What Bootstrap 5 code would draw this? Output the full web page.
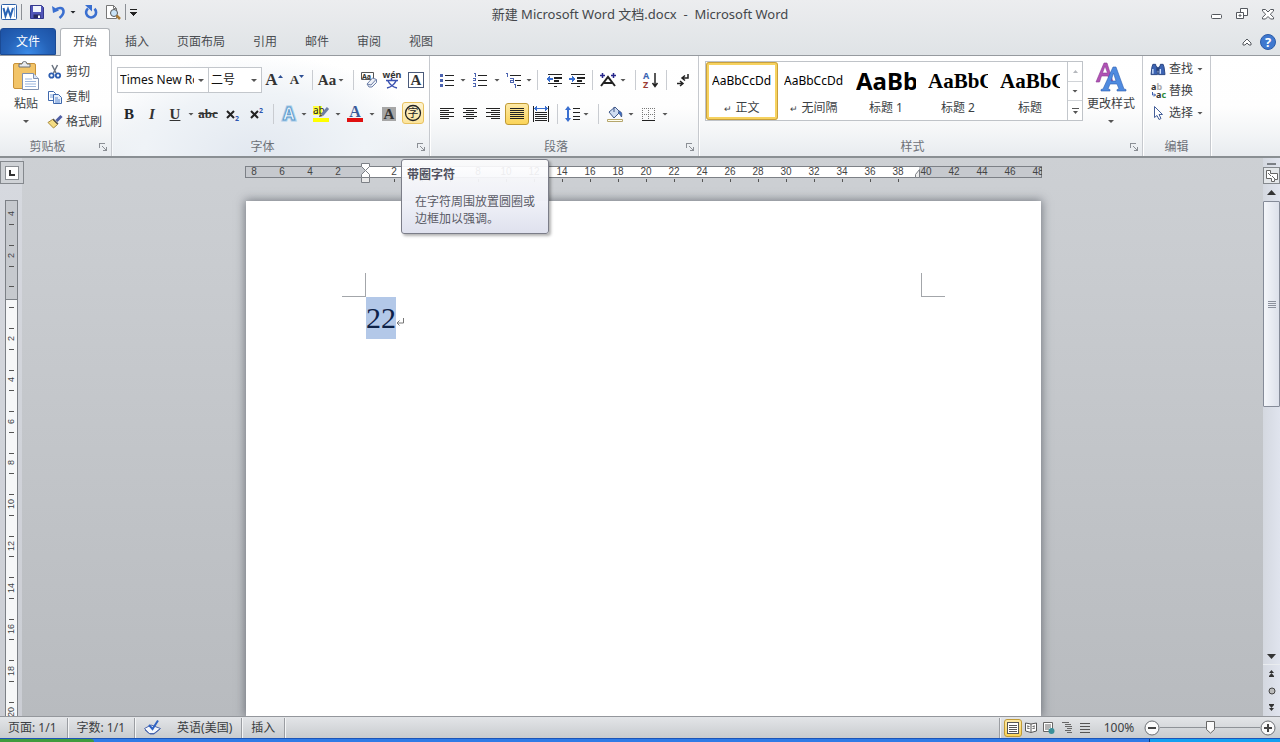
<!DOCTYPE html>
<html lang="zh-CN">
<head>
<meta charset="utf-8">
<meta name="viewport" content="width=device-width, initial-scale=1">
<title>新建 Microsoft Word 文档.docx - Microsoft Word</title>
<link href="https://cdn.jsdelivr.net/npm/bootstrap@5.3.0/dist/css/bootstrap.min.css" rel="stylesheet">
<style>
body{height:100vh;overflow:hidden;font-family:"Noto Sans","Noto Sans CJK SC",sans-serif;font-size:12px;line-height:16px;color:#3c3f44;background:#c4c6ca}
button{font:inherit;color:inherit;border:0;background:none;padding:0;display:inline-flex;align-items:center;justify-content:center;flex:none}
svg{display:block;flex:none;overflow:visible}
.crisp{shape-rendering:crispEdges}
.tri{display:block;flex:none;width:6px;height:3px;background:#555;clip-path:polygon(0 0,100% 0,50% 100%)}
.shell-top{background:linear-gradient(#ecedef,#dfe3e6)}
.titlebar{height:28px;padding:0 6px 4px 1px}
.doc-title{font-size:13px;color:#44474b;margin-top:3px}
.vsep{width:1px;height:16px;background:#8b8f95;flex:none}
.tabs{height:28px;border-bottom:1px solid #969a9f}
.tabs a{display:block;color:#4a4d52;text-decoration:none;padding:0 14px;height:28px;line-height:28px}
.tabs a.file-tab{background:radial-gradient(ellipse at 50% 100%,#3b8be8 0,#2563b9 55%,#1c51a4 100%);color:#fff;width:56px;border:1px solid #1b4a94;border-radius:3px 3px 0 0;height:27px;line-height:26px;margin-right:4px}
.tabs a.on{background:#fff;border:1px solid #b0b4b9;border-bottom:0;border-radius:3px 3px 0 0;padding:0 12px;margin-right:1px;line-height:26px}
.ribbon{height:102px;background:linear-gradient(#fff 0,#fefefe 50%,#f2f4f6 80%,#e8ebef 100%);border-bottom:2px solid #8a8f93;z-index:5}
.grp{display:flex;flex-direction:column;flex:none;border-right:1px solid #c6c9ce;box-shadow:1px 0 #fff}
.g-clip{width:112px}.g-font{width:318px;padding-left:5px;background:radial-gradient(ellipse at 45% 100%,#e2e8f0,#eff3f7 45%,transparent 72%)}
.g-para{width:269px;padding-left:5px}.g-style{width:444px}.g-edit{width:68px}
.g-rows{padding-top:7px}
.line{display:flex;align-items:center;height:34px}
.grp footer{display:flex;align-items:center;height:18px;margin-top:auto;color:#6d7178;text-align:center}
.grp footer span{flex:1}
.g-font footer,.g-para footer{margin-left:-5px}
.launch{width:16px;height:16px}
.clip-row{height:24px}
.b20{width:20px;height:22px}.b22{width:22px;height:22px}.b24{width:24px;height:22px}.b26{width:26px;height:22px}.dd{width:8px;height:22px}
.gap-bar{width:9px;height:20px;flex:none;background:linear-gradient(#c9ccd1,#c9ccd1) center/1px 100% no-repeat}
.hot{background:linear-gradient(#fde9a6,#fbd458);border:1px solid #c09a35;border-radius:3px}
.hot.soft{background:linear-gradient(#fdf3d2,#fce49a);border-color:#e8c15f}
.combo{appearance:none;border:1px solid #c3c7cc;border-radius:0;height:26px;color:#111;padding:0 14px 0 2px;background:#fff url("data:image/svg+xml,%3Csvg xmlns='http://www.w3.org/2000/svg' width='6' height='3'%3E%3Cpath d='M0 0h6L3 3z' fill='%23555'/%3E%3C/svg%3E") no-repeat right 4px center;font-size:12px;flex:none}
.c-name{width:92px}.c-size{width:54px;margin-left:-1px}
.ser{font-family:"Liberation Serif","Noto Sans CJK SC",serif;font-weight:700;color:#333}
.f13{font-size:13px}.f15{font-size:15px}.f17{font-size:17px}
.tip{left:-1px;top:57px;width:148px;height:75px;border:1px solid #7b7d88;border-radius:3px;background:linear-gradient(rgba(255,255,255,.9),rgba(240,241,248,.97) 55%,#dfe1ee);box-shadow:2px 2px 3px rgba(0,0,0,.3);color:#5a5b66;text-align:left;padding:6px 5px;z-index:20;line-height:17px}
.tip b{display:block;color:#505260;margin-bottom:10px}
.tip p{margin:0 0 0 8px}
.gallery{border:1px solid #bfc3c8;height:60px;margin:5px 0 0 6px;background:#fff;width:378px}
.tile{width:72px;flex-direction:column;justify-content:flex-start;height:58px;border:3px solid transparent;padding-top:1px}
.tile small{font-size:9px}
.tile.on{border-color:#f6d25f;outline:1px solid #c9a03c;outline-offset:-1px;border-radius:3px}
.pv{display:flex;align-items:center;width:60px;height:30px;overflow:hidden;white-space:nowrap;color:#000;line-height:30px}
.pv.h1x{font-weight:700;font-size:24px}
.pv.h2x{font-family:"Liberation Serif",serif;font-weight:700;font-size:21px;color:#000}
.g-scroll{width:15px;border-left:1px solid #c3c7cc}
.g-scroll button{flex:1;width:100%;border-bottom:1px solid #d0d3d7}
.edit-list{padding:2px 0 0 8px}
.work{background:linear-gradient(#cdd0d4,#b8bbbf);min-height:0}
.lcol{width:24px;flex:none}
.lcol-in{width:22px;background:rgba(226,229,238,.45)}
.corner{width:24px;height:23px;margin-top:3px;border:1px solid #85898e;background:#cfd2d6}
.corner span{display:flex;width:14px;height:14px;border:1px solid #8a8e93;background:#fff;align-items:center;justify-content:center}
.vruler{width:13px;margin:16px 0 0 5px;border:1px solid #7c8086;border-bottom:0;background:linear-gradient(#c6c9ce 98px,#7c8086 98px,#7c8086 99px,#f6f7f8 99px);overflow:hidden;min-height:0}
.vruler ol{height:540px;margin:-8px 0 0;font:9px/11px "Liberation Sans Narrow","Liberation Sans",sans-serif}
.vruler li{flex:1;width:11px;display:flex;align-items:center;justify-content:center;position:relative}
.vruler li span{writing-mode:vertical-rl;transform:rotate(180deg)}
.vruler li::before,.vruler li::after{content:"";position:absolute;left:3px;width:5px;height:1px;background:#555;top:25%}
.vruler li::after{top:75%}
.vruler li:first-child::before{display:none}
.hruler{width:797px;height:24px;margin:4px auto 0;overflow:hidden}
.hruler ol{height:12px;margin:4px 0 0;border:1px solid #7c8086;background:linear-gradient(90deg,#c6c9ce 120px,#fff 120px,#fff 673px,#c6c9ce 673px);font:10px/10px "Liberation Sans",sans-serif;color:#444;padding-left:0}
.hruler li{width:28px;flex:none;text-align:center;position:relative}
.hruler li:first-child{margin-left:-6px}
.hruler li.t::after{content:"";position:absolute;left:14px;top:12px;width:1px;height:3px;background:#555}
.mk{top:1px;left:116px}.mk2{top:4px;left:670px}
.hband{height:43px;flex:none}
.page{width:795px;margin:0 auto;background:#fff;padding:72px 96px 0;box-shadow:0 0 9px 1px rgba(50,55,65,.55)}
.cm{width:24px;height:24px;border-bottom:1px solid #a3a6aa}
.cm.l{border-right:1px solid #a3a6aa}.cm.r{border-left:1px solid #a3a6aa}
.body-line{padding-left:24px;font:30px/42px "Liberation Serif",serif;color:#0e2248}
.body-line mark{background:#b3c8e8;color:inherit;padding:0}
.scroll{width:17px;flex:none;background:linear-gradient(90deg,#d4d8e0,#e0e4ee);padding-top:3px}
.scroll button{width:100%}
.split{height:6px}.rtog{height:17px;border:1px solid #85898e;background:#e4e7ea}
.up{height:17px}.thumb{height:206px;border:1px solid #858b98;border-radius:1px;background:linear-gradient(90deg,#f4f6fa,#dce0ea)}
.nv{height:17px}
.status{height:22px;background:linear-gradient(#e3e5e8,#c9cccf);border-top:1px solid #94979c;color:#3b3e42}
.status .cell{height:20px;border-right:1px solid #9a9da2;box-shadow:1px 0 #f4f5f6;padding:0 9px;display:flex;align-items:center}
.status .cell:first-child{padding:0 10px 0 8px}
.status .v{width:18px;height:18px}
.pct{width:34px}
.zoomr{appearance:none;width:100px;height:16px;margin:0;background:linear-gradient(#8e9297,#8e9297) center/100% 1px no-repeat}
.zoomr::-webkit-slider-thumb{appearance:none;width:9px;height:13px;background:url("data:image/svg+xml,%3Csvg xmlns='http://www.w3.org/2000/svg' width='9' height='13'%3E%3Cpath d='M.5.5h8v8l-4 3.6-4-3.6z' fill='%23fafafa' stroke='%23666'/%3E%3C/svg%3E")}
.strip{height:4px;background:#2f7be6;border-top:1px solid #1c55b8}
.strip .s1{width:94px;background:#3f9b3d;border-radius:0 4px 0 0}.strip .s2{width:131px;background:#14a0f0;border-left:1px solid #0b3a80}
</style>
</head>
<body class="d-flex flex-column">
<header class="shell-top flex-shrink-0">
  <div class="titlebar d-flex align-items-center position-relative">
    <svg width="16" height="16" viewBox="0 0 16 16"><rect x=".5" y=".5" width="15" height="15" rx="1" fill="#fff" stroke="#2c5fa8"/><path d="M13.500 3v10" stroke="#8fb0dd"/><path d="M2.500 4l2 8L7 5l2.500 7L12 4" fill="none" stroke="#2a64b5" stroke-width="2"/></svg>
    <span class="vsep mx-1"></span>
    <button class="ms-1" aria-label="保存"><svg width="14" height="14" viewBox="0 0 14 14"><path d="M.5.5h11l2 2v11H.5z" fill="#5156b8" stroke="#34388c"/><path d="M3 1h8v6H3z" fill="#f2f5fb"/><path d="M3.500 9.500h7V13h-7z" fill="#27295f"/><path d="M8 10.500h2V13H8z" fill="#fff"/></svg></button>
    <button class="ms-2" aria-label="撤销"><svg width="14" height="14" viewBox="0 0 14 14"><path d="M3 5.500C6 2 11 2 11.500 6c.3 3-1.500 5-4 7" fill="none" stroke="#3a6fd0" stroke-width="2.600"/><path d="M0 1l1 7 6-2.500z" fill="#3a6fd0"/></svg></button>
    <button class="ms-1" aria-label="撤销列表"><i class="tri bg-dark"></i></button>
    <button class="ms-2" aria-label="重复"><svg width="14" height="14" viewBox="0 0 14 14"><path d="M10.500 3.800A5 5 0 1 1 4 3.500" fill="none" stroke="#3a6fd0" stroke-width="2.600"/><path d="M1 0h7v6.500z" fill="#3a6fd0"/></svg></button>
    <button class="ms-2" aria-label="打印预览"><svg width="15" height="15" viewBox="0 0 15 15"><path d="M.5.500h7l3 3v10H.500z" fill="#fff" stroke="#777"/><path d="M7.500.5v3h3" fill="none" stroke="#777"/><circle cx="8" cy="8" r="3.500" fill="#c9e3f6" stroke="#555"/><path d="M10.500 10.500l3.500 3.500" stroke="#a97b35" stroke-width="2.500"/></svg></button>
    <span class="vsep me-1 ms-1"></span>
    <button aria-label="自定义快速访问工具栏"><svg class="crisp" width="7" height="7"><path d="M0 0h7v1H0z" fill="#222"/><path d="M0 3h7L3.500 7z" fill="#222"/></svg></button>
    <div class="doc-title position-absolute start-0 end-0 text-center pe-none">新建 Microsoft Word 文档.docx&nbsp; -&nbsp; Microsoft Word</div>
    <div class="ms-auto d-flex align-items-center pt-1" style="gap:14px">
      <button aria-label="最小化"><svg width="11" height="12"><rect x=".5" y="6.500" width="10" height="4" rx="1" fill="#fff" stroke="#54585e"/></svg></button>
      <button aria-label="向下还原"><svg width="12" height="12"><path d="M4.500.500h7v7h-7z" fill="#fff" stroke="#54585e"/><path d="M.5 4.500h7v6h-7z" fill="#fff" stroke="#54585e"/><path d="M3 7h2v1H3z" stroke="#54585e" fill="none"/></svg></button>
      <button aria-label="关闭"><svg width="12" height="11"><path d="M.5.5h3L6 3 8.500.5h3v1.600L8.300 5.200l3.200 3.200V10h-3L6 7.500 3.500 10h-3V8.400l3.200-3.200L.5 2.100z" fill="#fff" stroke="#54585e"/></svg></button>
    </div>
  </div>
  <nav class="tabs d-flex">
    <a class="file-tab text-center px-0" href="#">文件</a><a class="on" href="#">开始</a><a href="#">插入</a><a href="#">页面布局</a><a href="#">引用</a><a href="#">邮件</a><a href="#">审阅</a><a href="#">视图</a>
    <div class="ms-auto d-flex align-items-center gap-2 pe-1">
      <button aria-label="功能区最小化"><svg width="10" height="8"><path d="M1 5l4-4 4 4v2H7L5 5 3 7H1z" fill="#fff" stroke="#54585e"/></svg></button>
      <button aria-label="帮助"><svg width="16" height="16"><circle cx="8" cy="8" r="7.500" fill="#3f78cf" stroke="#2c5ca8"/><text x="8" y="13" font-size="13" font-weight="700" fill="#fff" text-anchor="middle">?</text></svg></button>
    </div>
  </nav>
</header>

<section class="ribbon d-flex flex-shrink-0 position-relative">
  <div class="grp g-clip">
    <div class="d-flex align-items-start">
      <button class="flex-column ms-2 mt-1 px-1">
        <svg width="28" height="32" viewBox="0 0 28 32"><rect x="1.500" y="3.500" width="22" height="25" rx="1.500" fill="#f2c468" stroke="#c8923a"/><path d="M7 7V4h3a2.500 2.500 0 0 1 5 0h3v3z" fill="#e9ebee" stroke="#6c7076"/><path d="M10.500 13.500h11l5 5v11h-16z" fill="#fff" stroke="#7f91b0"/><path d="M21.500 13.500v5h5" fill="#dbe6f6" stroke="#7f91b0"/><path d="M13 19h7M13 21.500h11M13 24h11M13 26.500h11" stroke="#9db7dd"/></svg>
        <span class="mt-1">粘贴</span><i class="tri mt-2"></i>
      </button>
      <div class="d-flex flex-column ms-1 mt-1" style="gap:1px">
        <button class="clip-row justify-content-start gap-1"><svg width="14" height="14" viewBox="0 0 14 14"><path d="M4 0l4 8M9.500 0L5.500 8" stroke="#6b7480" stroke-width="1.500"/><circle cx="3.500" cy="10.500" r="2.200" fill="none" stroke="#2c5db0" stroke-width="1.800"/><circle cx="10" cy="10.500" r="2.200" fill="none" stroke="#2c5db0" stroke-width="1.800"/></svg>剪切</button>
        <button class="clip-row justify-content-start gap-1"><svg width="14" height="13" viewBox="0 0 14 13"><path d="M.5.500h5l2 2v7h-7z" fill="#fff" stroke="#3e68ad"/><path d="M2 4h4M2 6h4" stroke="#7ba0da"/><path d="M5.500 3.500h5l3 3v6h-8z" fill="#e7effb" stroke="#3e68ad"/><path d="M7 7h3M7 9h5M7 11h5" stroke="#5d89cf"/></svg>复制</button>
        <button class="clip-row justify-content-start gap-1"><svg width="14" height="14" viewBox="0 0 14 14"><path d="M13.500 1L8.500 6" stroke="#4f5fa5" stroke-width="3"/><path d="M4.500 4.500l5 5-4 3.500L0 7.500z" fill="#f4dc83" stroke="#a98a3c"/><path d="M5 4l5 5" stroke="#555" stroke-width="1.500"/></svg>格式刷</button>
      </div>
    </div>
    <footer><span>剪贴板</span><button class="launch" aria-label="剪贴板选项"><svg class="crisp" width="8" height="8"><path d="M0 5V0h6" fill="none" stroke="#8b8f95"/><path d="M3 3l4 4M7 4v3H4" fill="none" stroke="#8b8f95"/></svg></button></footer>
  </div>

  <div class="grp g-font">
    <div class="g-rows">
      <div class="line">
        <select class="combo c-name" aria-label="字体"><option>Times New Roman</option></select>
        <select class="combo c-size" aria-label="字号"><option>二号</option></select>
        <button class="b24 ser f17" aria-label="增大字体">A<svg class="mb-2" width="5" height="3"><path d="M0 3h5L2.500 0z" fill="#2d4f94"/></svg></button>
        <button class="b22 ser f13" aria-label="缩小字体">A<svg class="mb-2" width="5" height="3"><path d="M0 0h5L2.500 3z" fill="#2d4f94"/></svg></button>
        <span class="gap-bar"></span>
        <button class="b20 ser f15" aria-label="更改大小写">Aa</button><button class="dd" aria-label="大小写选项"><i class="tri"></i></button>
        <span class="gap-bar ms-1"></span>
        <button class="b22" aria-label="清除格式"><svg width="16" height="16" viewBox="0 0 16 16"><path d="M.5.500h12v7H.500z" fill="#fff" stroke="#555"/><text x="1" y="7" font-size="7" font-weight="700" fill="#333">Aa</text><path d="M6 12l5.500-6 4 1.500v3L11 15H8z" fill="#eef1f7" stroke="#6c7fa8"/><path d="M6 12l4 1 5-5.500" fill="none" stroke="#6c7fa8"/></svg></button>
        <button class="b24" aria-label="拼音指南"><svg width="18" height="18"><text x="9" y="7" font-size="9" font-weight="700" fill="#333" text-anchor="middle">wén</text><path d="M8.500 7v2M3 9.500h12M5 10c2 4 5 6 9 7M13 10c-2 4-5 6-9 7" fill="none" stroke="#3b52b0" stroke-width="1.500"/></svg></button>
        <button class="b24" aria-label="字符边框"><svg width="16" height="16"><rect x=".5" y=".5" width="15" height="15" fill="#fff" stroke="#4a5a7a"/><text class="ser" x="8" y="13" font-size="15" fill="#333" text-anchor="middle">A</text></svg></button>
      </div>
      <div class="line">
        <button class="b24 ser f15 text-dark">B</button><button class="b22 ser f15 fst-italic">I</button><button class="b24 ser f15 text-decoration-underline">U</button><button class="dd" aria-label="下划线选项"><i class="tri"></i></button>
        <button class="b26 ser f13 text-decoration-line-through">abc</button>
        <button class="b24" aria-label="下标"><svg width="14" height="14"><path d="M1 4l7 7M8 4l-7 7" stroke="#222" stroke-width="2"/><text x="9" y="14" font-size="7" font-weight="700" fill="#2d56b0">2</text></svg></button><button class="b24" aria-label="上标"><svg width="14" height="14"><path d="M1 4l7 7M8 4l-7 7" stroke="#222" stroke-width="2"/><text x="9" y="6" font-size="7" font-weight="700" fill="#2d56b0">2</text></svg></button>
        <span class="gap-bar"></span>
        <button class="b22" aria-label="文本效果"><svg width="16" height="16"><text x="8" y="14" font-size="17" font-weight="700" text-anchor="middle" fill="#eaf5fd" stroke="#a9cdea" stroke-width="3">A</text><text x="8" y="14" font-size="17" font-weight="700" text-anchor="middle" fill="#eef7fd" stroke="#5f9ccc">A</text></svg></button><button class="dd" aria-label="文本效果选项"><i class="tri"></i></button>
        <button class="b26" aria-label="突出显示"><svg width="16" height="16"><path d="M0 0h9v9H0z" fill="#ffff3c"/><text x="0" y="8" font-size="10" fill="#222">ab</text><path d="M15 2L9 9" stroke="#6d7ea5" stroke-width="3"/><path d="M7 8l3 2-4 1z" fill="#5b5030"/><path d="M0 12h16v4H0z" fill="#ff0"/></svg></button><button class="dd" aria-label="突出显示选项"><i class="tri"></i></button>
        <button class="b26" aria-label="字体颜色"><svg width="16" height="16"><text class="ser" x="8" y="11" font-size="16" style="fill:#3a5b9b" text-anchor="middle">A</text><path d="M0 12h16v4H0z" fill="#e01010"/></svg></button><button class="dd" aria-label="字体颜色选项"><i class="tri"></i></button>
        <button class="b26" aria-label="字符底纹"><svg width="14" height="14"><path d="M0 0h14v14H0z" fill="#a6a6a6"/><text class="ser" x="7" y="12" font-size="15" fill="#333" text-anchor="middle">A</text></svg></button>
        <div class="position-relative">
          <button class="b22 hot soft" aria-label="带圈字符" aria-describedby="tip"><svg width="18" height="18"><circle cx="9" cy="9" r="7.500" fill="none" stroke="#222" stroke-width="1.300"/><text x="9" y="13" font-size="11" fill="#222" text-anchor="middle">字</text></svg></button>
          <div class="tip position-absolute" id="tip" role="tooltip"><b>带圈字符</b><p>在字符周围放置圆圈或边框加以强调。</p></div>
        </div>
      </div>
    </div>
    <footer><span>字体</span><button class="launch" aria-label="字体选项"><svg class="crisp" width="8" height="8"><path d="M0 5V0h6" fill="none" stroke="#8b8f95"/><path d="M3 3l4 4M7 4v3H4" fill="none" stroke="#8b8f95"/></svg></button></footer>
  </div>

  <div class="grp g-para">
    <div class="g-rows">
      <div class="line">
        <button class="b24" aria-label="项目符号"><svg class="crisp" width="14" height="14"><path d="M0 1h3v3H0zM0 6h3v3H0zM0 11h3v3H0z" fill="#4b63b0"/><path d="M5 2h9v1H5zM5 7h9v1H5zM5 12h9v1H5z" fill="#222"/></svg></button><button class="dd" aria-label="项目符号库"><i class="tri"></i></button>
        <button class="b26" aria-label="编号"><svg class="crisp" width="14" height="14"><path d="M1 0h1v4M0 5h2v2H0M0 10h2v3H0" fill="none" stroke="#4b63b0"/><path d="M5 2h9v1H5zM5 7h9v1H5zM5 12h9v1H5z" fill="#222"/></svg></button><button class="dd" aria-label="编号库"><i class="tri"></i></button>
        <button class="b24" aria-label="多级列表"><svg class="crisp" width="16" height="15"><path d="M1 0h1v4M5 5h3v4H5V7h3M9 11h1v4" fill="none" stroke="#4b63b0"/><path d="M5 2h11v1H5zM10 7h6v1h-6zM12 12h4v1h-4z" fill="#222"/></svg></button><button class="dd" aria-label="列表库"><i class="tri"></i></button>
        <span class="gap-bar"></span>
        <button class="b24" aria-label="减少缩进量"><svg class="crisp" width="16" height="14"><path d="M2 1h14v1H2zM8 4h8v2H8zM8 7h5v2H8zM2 10h14v1H2zM8 13h3v1H8z" fill="#222"/><path d="M0 6l4-3v2h3v2H4v2z" fill="#3a6fd0"/></svg></button><button class="b22" aria-label="增加缩进量"><svg class="crisp" width="16" height="14"><path d="M2 1h14v1H2zM8 4h8v2H8zM8 7h5v2H8zM2 10h14v1H2zM8 13h3v1H8z" fill="#222"/><path d="M7 6L3 3v2H0v2h3v2z" fill="#3a6fd0"/></svg></button>
        <span class="gap-bar"></span>
        <button class="b22" aria-label="中文版式"><svg width="16" height="14"><path d="M1 13L8 4l7 9M4 10h8" fill="none" stroke="#222" stroke-width="2"/><path d="M0 2.500h5M2.500 0v5M16 2.500h-5M13.500 0v5" fill="none" stroke="#26268c" stroke-width="1.500"/></svg></button><button class="dd" aria-label="中文版式选项"><i class="tri"></i></button>
        <span class="gap-bar ms-1"></span>
        <button class="b22" aria-label="排序"><svg width="16" height="16"><text x="0" y="7" font-size="9" font-weight="700" fill="#3a66b4">A</text><text x="0" y="16" font-size="9" font-weight="700" fill="#9a3b34">Z</text><path d="M12 1v13M9.500 11l2.500 3.500 2.500-3.500" fill="none" stroke="#222" stroke-width="1.500"/></svg></button>
        <span class="gap-bar"></span>
        <button class="b24" aria-label="显示编辑标记"><svg width="12" height="14"><path d="M11 1v4H5M8 2.500L5 5l3 2.500M0 10.500h5M3 8l3 2.500L3 13" fill="none" stroke="#222" stroke-width="1.500"/></svg></button>
      </div>
      <div class="line">
        <button class="b24" aria-label="左对齐"><svg class="crisp" width="14" height="12"><path d="M0 0h14v1H0zM0 2h9v1H0zM0 4h14v1H0zM0 6h9v1H0zM0 8h14v1H0zM0 10h9v1H0z" fill="#222"/></svg></button><button class="b22" aria-label="居中"><svg class="crisp" width="14" height="12"><path d="M0 0h14v1H0zM3 2h8v1H3zM0 4h14v1H0zM3 6h8v1H3zM0 8h14v1H0zM3 10h8v1H3z" fill="#222"/></svg></button><button class="b24" aria-label="右对齐"><svg class="crisp" width="14" height="12"><path d="M0 0h14v1H0zM5 2h9v1H5zM0 4h14v1H0zM5 6h9v1H5zM0 8h14v1H0zM5 10h9v1H5z" fill="#222"/></svg></button><button class="b24 hot" aria-label="两端对齐"><svg class="crisp" width="14" height="12"><path d="M0 0h14v1H0zM0 2h14v1H0zM0 4h14v1H0zM0 6h14v1H0zM0 8h14v1H0zM0 10h14v1H0z" fill="#222"/></svg></button><button class="b24" aria-label="分散对齐"><svg class="crisp" width="16" height="16"><path d="M2 6h12v1H2zM2 8h12v1H2zM2 10h12v1H2zM2 12h12v1H2zM2 14h12v1H2zM0 0h1v16H0zM15 0h1v16h-1z" fill="#222"/><path d="M1 2.500L4 0v2h8V0l3 2.500L12 5V3H4v2z" fill="#3a6fd0"/></svg></button>
        <span class="gap-bar"></span>
        <button class="b20" aria-label="行距"><svg width="15" height="16"><path d="M3 0l3 4H4v8h2l-3 4-3-4h2V4H0z" fill="#3a6fd0"/><path class="crisp" d="M8 2h7v1H8zM8 6h7v1H8zM8 10h7v1H8zM8 13h7v1H8z" fill="#222"/></svg></button><button class="dd" aria-label="行距选项"><i class="tri"></i></button>
        <span class="gap-bar ms-1"></span>
        <button class="b24" aria-label="底纹"><svg width="16" height="16"><path d="M2 6l6-5 5 5-6 6z" fill="#cfdcf0" stroke="#41598a"/><path d="M7 1v5M12 5c3 1 3 3 2.500 6-1-2-2-3-3-4z" fill="#3a6fd0" stroke="#41598a"/><path d="M.5 13.500h15v2H.500z" fill="#fffef0" stroke="#b5a66c"/></svg></button><button class="dd" aria-label="底纹选项"><i class="tri"></i></button>
        <button class="b26" aria-label="边框"><svg class="crisp" width="13" height="13"><path d="M0 .5h13M0 6.500h13M.5 0v12M6.500 0v12M12.500 0v12" fill="none" stroke="#777" stroke-dasharray="1 1"/><path d="M0 12h13v1H0z" fill="#222"/></svg></button><button class="dd" aria-label="边框选项"><i class="tri"></i></button>
      </div>
    </div>
    <footer><span>段落</span><button class="launch" aria-label="段落选项"><svg class="crisp" width="8" height="8"><path d="M0 5V0h6" fill="none" stroke="#8b8f95"/><path d="M3 3l4 4M7 4v3H4" fill="none" stroke="#8b8f95"/></svg></button></footer>
  </div>

  <div class="grp g-style">
    <div class="d-flex align-items-start">
      <div class="gallery d-flex">
        <button class="tile on"><span class="pv">AaBbCcDd</span><span class="mt-1"><small>↵</small> 正文</span></button>
        <button class="tile"><span class="pv">AaBbCcDd</span><span class="mt-1"><small>↵</small> 无间隔</span></button>
        <button class="tile"><span class="pv h1x">AaBb</span><span class="mt-1">标题 1</span></button>
        <button class="tile"><span class="pv h2x">AaBbC</span><span class="mt-1">标题 2</span></button>
        <button class="tile"><span class="pv h2x">AaBbC</span><span class="mt-1">标题</span></button>
        <div class="g-scroll d-flex flex-column ms-auto"><button aria-label="上一行"><svg width="5" height="3"><path d="M0 3h5L2.500 0z" fill="#b5b8bd"/></svg></button><button aria-label="下一行"><i class="tri"></i></button><button class="border-bottom-0" aria-label="其他"><svg width="7" height="6"><path d="M0 .5h7" stroke="#555"/><path d="M1 3h5L3.500 6z" fill="#555"/></svg></button></div>
      </div>
      <button class="flex-column ms-1 mt-1"><svg width="30" height="32" viewBox="0 -2 30 32"><path d="M0 20L8 1h3l6 19h-3l-2-6H5.500L3.500 20zM6.500 11h5L9 4z" fill="#b052b4" stroke="#8b3a93" stroke-width=".6"/><path d="M5 29v-1.500l2-.500L17 5h3l8 22 2 .5V29h-9v-1.500l2-.5-2-5h-7l-2 5 2 .500V29zM15 19h5l-2.500-8z" fill="#4f8be0" stroke="#2f5fb0" stroke-width=".6"/></svg><span class="mt-1">更改样式</span><i class="tri mt-2"></i></button>
    </div>
    <footer><span>样式</span><button class="launch" aria-label="样式选项"><svg class="crisp" width="8" height="8"><path d="M0 5V0h6" fill="none" stroke="#8b8f95"/><path d="M3 3l4 4M7 4v3H4" fill="none" stroke="#8b8f95"/></svg></button></footer>
  </div>

  <div class="grp g-edit">
    <div class="edit-list d-flex flex-column align-items-start">
      <button class="gap-1 b22 w-auto"><svg width="14" height="14" viewBox="0 0 15 14"><path d="M2 2h3v2h1l1 9H0l1-8zM10 2h3l1 3 1 8H8l1-9h1z" fill="#3c64b4" stroke="#26427e"/><path d="M6 5h3v4H6z" fill="#26427e"/><path d="M2 7v5M10 7v5" stroke="#cfe0fb" stroke-width="1.500"/></svg>查找<i class="tri"></i></button>
      <button class="gap-1 b22 w-auto"><svg width="14" height="15"><text x="0" y="6" font-size="9" font-weight="700" fill="#333">a<tspan fill="#aaa">b</tspan></text><text x="5" y="14" font-size="9" font-weight="700" fill="#333">a<tspan fill="#2f8a3a">c</tspan></text><path d="M1.500 8v3h3M3 9.500L4.500 11 3 12.500" fill="none" stroke="#3a5fb0"/></svg>替换</button>
      <button class="gap-1 b22 w-auto"><svg width="14" height="14"><path d="M3.500.500v11l2.500-2 2 4 2-1-2-4h3.500z" fill="#fff" stroke="#45609a"/></svg>选择<i class="tri"></i></button>
    </div>
    <footer><span>编辑</span></footer>
  </div>
</section>

<main class="work d-flex flex-grow-1">
  <div class="lcol d-flex">
    <div class="lcol-in d-flex flex-column">
      <button class="corner" aria-label="制表符"><span><svg width="6" height="6"><path d="M1 0v5h5" fill="none" stroke="#333" stroke-width="2"/></svg></span></button>
      <div class="vruler flex-grow-1">
        <ol class="list-unstyled d-flex flex-column"><li><span>4</span></li><li><span>2</span></li><li></li><li><span>2</span></li><li><span>4</span></li><li><span>6</span></li><li><span>8</span></li><li><span>10</span></li><li><span>12</span></li><li><span>14</span></li><li><span>16</span></li><li><span>18</span></li><li><span>20</span></li></ol>
      </div>
    </div>
  </div>
  <div class="flex-grow-1 d-flex flex-column overflow-hidden">
    <div class="hband">
      <div class="hruler position-relative">
        <ol class="d-flex list-unstyled"><li>8</li><li>6</li><li>4</li><li>2</li><li></li><li class="t">2</li><li class="t">4</li><li class="t">6</li><li class="t">8</li><li class="t">10</li><li class="t">12</li><li class="t">14</li><li class="t">16</li><li class="t">18</li><li class="t">20</li><li class="t">22</li><li class="t">24</li><li class="t">26</li><li class="t">28</li><li class="t">30</li><li class="t">32</li><li class="t">34</li><li class="t">36</li><li class="t">38</li><li>40</li><li>42</li><li>44</li><li>46</li><li>48</li></ol>
        <svg class="mk position-absolute" width="10" height="21"><path d="M.5.500h8v3l-4 4-4-4zM.5 14.500v-3l4-4 4 4v3z" fill="#fff" stroke="#7c8086"/><path d="M.5 14.500h8v5h-8z" fill="#e9e9e9" stroke="#7c8086"/></svg>
        <svg class="mk2 position-absolute" width="9" height="12"><path d="M.5 11.500v-3l4-5v8z" fill="#eee" stroke="#7c8086"/></svg>
      </div>
    </div>
    <article class="page flex-grow-1">
      <div class="d-flex justify-content-between"><span class="cm l"></span><span class="cm r"></span></div>
      <div class="body-line d-flex align-items-center"><mark>22</mark><svg class="mt-2" width="8" height="8"><path d="M7.500 0v5H1M3.500 2.500L1 5l2.500 2.500" fill="none" stroke="#777"/></svg></div>
    </article>
  </div>
  <div class="scroll d-flex flex-column">
    <button class="split" aria-label="拆分"><svg width="9" height="2"><path d="M0 0h9v2H0z" fill="#7c8086"/></svg></button>
    <button class="rtog" aria-label="标尺"><svg width="12" height="12"><path d="M.5.500h4v3h7v6h-3v2h-3v-3h-5zM2 3l3 3M6 6l3 3" fill="#fff" stroke="#666"/></svg></button>
    <button class="up" aria-label="向上"><svg width="9" height="5"><path d="M0 5h9L4.500 0z" fill="#333"/></svg></button>
    <button class="thumb" aria-label="滚动条"><svg class="crisp" width="8" height="7"><path d="M0 0h8v1H0zM0 2h8v1H0zM0 4h8v1H0zM0 6h8v1H0z" fill="#8b909c"/></svg></button>
    <button class="nv mt-auto border-bottom border-secondary-subtle" aria-label="向下"><svg width="9" height="5"><path d="M0 0h9L4.500 5z" fill="#333"/></svg></button>
    <button class="nv" aria-label="前一页"><svg width="5" height="7"><path d="M2.500 0L5 3H0zM2.500 3L5 6H0z" fill="#333"/><path d="M0 6.500h5" stroke="#333"/></svg></button>
    <button class="nv" aria-label="选择浏览对象"><svg width="8" height="8"><circle cx="4" cy="4" r="3" fill="#bbb" stroke="#444"/></svg></button>
    <button class="nv" aria-label="下一页"><svg width="5" height="7"><path d="M2.500 7L5 4H0zM2.500 4L5 1H0z" fill="#333"/><path d="M0 .5h5" stroke="#333"/></svg></button>
  </div>
</main>

<footer class="status d-flex flex-shrink-0 align-items-center">
  <span class="cell">页面: 1/1</span><span class="cell">字数: 1/1</span>
  <span class="cell"><svg class="me-3" width="17" height="15"><path d="M.5 8.500L7 5l9.500 3.500L10 13.500H5z" fill="#f4f7fd" stroke="#4b66ac"/><path d="M1 10l5 4h4l6-5" fill="none" stroke="#4b66ac"/><path d="M5 5l3.500 4L14 .500" fill="none" stroke="#2f63c4" stroke-width="2"/></svg>英语(美国)</span>
  <span class="cell">插入</span>
  <span class="cell ms-auto pe-0"></span>
  <button class="v hot ms-1" aria-label="页面视图"><svg class="crisp" width="12" height="12"><path d="M.5.500h11v11H.500z" fill="#fff" stroke="#555"/><path d="M2 3h8v1H2zM2 5h8v1H2zM2 7h8v1H2zM2 9h8v1H2z" fill="#555"/></svg></button>
  <button class="v" aria-label="阅读版式视图"><svg width="12" height="11"><path d="M.5 1L6 2l5.500-1v8L6 10.500.5 9zM6 2v8M2 4l2.500.500M2 6l2.500.500M7.500 4.500L10 4M7.500 6.500L10 6" fill="#fff" stroke="#555"/></svg></button>
  <button class="v" aria-label="Web 版式视图"><svg width="12" height="12"><path d="M.5.500h9v9h-9zM2 3h6M2 5h6M2 7h4" fill="#fff" stroke="#666"/><circle cx="8.500" cy="9" r="3" fill="#3a8f9a"/></svg></button>
  <button class="v" aria-label="大纲视图"><svg class="crisp" width="10" height="11"><path d="M0 0h7v1H0zM3 2h6v1H3zM3 4h7v1H3zM5 6h5v1H5zM3 8h6v1H3zM5 10h5v1H5z" fill="#666"/></svg></button>
  <button class="v" aria-label="草稿"><svg class="crisp" width="10" height="11"><path d="M0 1h10v1H0zM0 4h10v1H0zM0 7h10v1H0zM0 10h10v1H0z" fill="#555"/></svg></button>
  <button class="pct ms-2 me-2" aria-label="显示比例">100%</button>
  <button aria-label="缩小"><svg width="16" height="16"><circle cx="8" cy="8" r="7" fill="#fafafa" stroke="#6c7075"/><path d="M4 8h8" stroke="#444" stroke-width="2"/></svg></button>
  <input class="zoomr" type="range" aria-label="缩放" min="0" max="100" value="50">
  <button class="me-1" aria-label="放大"><svg width="16" height="16"><circle cx="8" cy="8" r="7" fill="#fafafa" stroke="#6c7075"/><path d="M4 8h8M8 4v8" stroke="#444" stroke-width="2"/></svg></button>
</footer>
<div class="strip d-flex flex-shrink-0 justify-content-between"><span class="s1"></span><span class="s2"></span></div>
<script src="https://cdn.jsdelivr.net/npm/bootstrap@5.3.0/dist/js/bootstrap.bundle.min.js"></script>
</body>
</html>
